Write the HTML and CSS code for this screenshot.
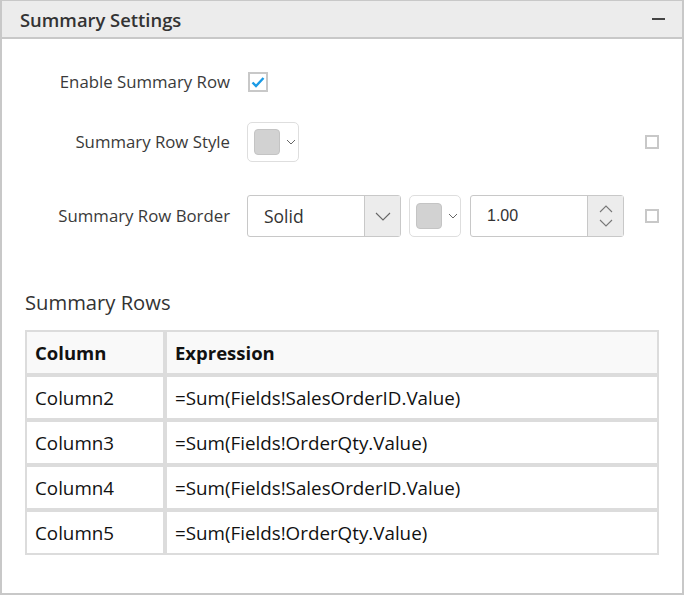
FILE: index.html
```html
<!DOCTYPE html>
<html>
<head>
<meta charset="utf-8">
<link rel="stylesheet" href="styles.css">
</head>
<body>
<div class="panel">
  <div class="panel-header">
    <span class="panel-title">Summary Settings</span>
    <span class="collapse-icon"></span>
  </div>
  <div class="panel-body">
    <div class="form">
      <div class="form-row row-enable">
        <label class="form-label">Enable Summary Row</label>
        <div class="controls">
          <span class="checkbox checked">
            <svg width="14" height="12" viewBox="0 0 14 12"><path d="M1.5 6.5 L5 10 L12.5 2" fill="none" stroke="#1a9be6" stroke-width="2.4" stroke-linecap="butt" stroke-linejoin="miter"/></svg>
          </span>
        </div>
        <span class="spacer"></span>
      </div>
      <div class="form-row row-style">
        <label class="form-label">Summary Row Style</label>
        <div class="controls">
          <span class="color-picker">
            <span class="swatch"></span>
            <svg class="mini-chevron" width="10" height="6" viewBox="0 0 10 6"><path d="M1 1 L5 5 L9 1" fill="none" stroke="#666" stroke-width="1"/></svg>
          </span>
        </div>
        <span class="small-check"></span>
      </div>
      <div class="form-row row-border">
        <label class="form-label">Summary Row Border</label>
        <div class="controls">
          <span class="dropdown">
            <span class="dropdown-text">Solid</span>
            <span class="dropdown-btn">
              <svg width="16" height="9" viewBox="0 0 16 9"><path d="M1 1 L8 8 L15 1" fill="none" stroke="#666" stroke-width="1.1"/></svg>
            </span>
          </span>
          <span class="color-picker">
            <span class="swatch"></span>
            <svg class="mini-chevron" width="10" height="6" viewBox="0 0 10 6"><path d="M1 1 L5 5 L9 1" fill="none" stroke="#666" stroke-width="1"/></svg>
          </span>
          <span class="numeric">
            <span class="numeric-text">1.00</span>
            <span class="spin">
              <svg width="14" height="8" viewBox="0 0 14 8"><path d="M1 7 L7 1 L13 7" fill="none" stroke="#777" stroke-width="1.1"/></svg>
              <svg width="14" height="8" viewBox="0 0 14 8"><path d="M1 1 L7 7 L13 1" fill="none" stroke="#777" stroke-width="1.1"/></svg>
            </span>
          </span>
        </div>
        <span class="small-check"></span>
      </div>
    </div>

    <div class="rows-section">
      <h2 class="section-title">Summary Rows</h2>
      <table class="rows-table">
        <thead>
          <tr><th class="col-name">Column</th><th>Expression</th></tr>
        </thead>
        <tbody>
          <tr><td>Column2</td><td>=Sum(Fields!SalesOrderID.Value)</td></tr>
          <tr><td>Column3</td><td>=Sum(Fields!OrderQty.Value)</td></tr>
          <tr><td>Column4</td><td>=Sum(Fields!SalesOrderID.Value)</td></tr>
          <tr><td>Column5</td><td>=Sum(Fields!OrderQty.Value)</td></tr>
        </tbody>
      </table>
    </div>
  </div>
</div>
</body>
</html>
```
FILE: styles.css
```css
* { box-sizing: border-box; }
html, body { margin: 0; padding: 0; background: #fff; }
body {
  font-family: "Open Sans", "Noto Sans", sans-serif;
  color: #333;
  width: 684px;
  height: 595px;
  overflow: hidden;
}
.panel {
  width: 684px;
  height: 595px;
  border: 2px solid #c8c8c8;
  border-top-width: 1px;
  border-bottom-width: 2px;
  display: flex;
  flex-direction: column;
}
.panel-header {
  height: 38px;
  background: #ececec;
  border-bottom: 2px solid #c8c8c8;
  display: flex;
  align-items: center;
  justify-content: space-between;
  padding: 0 17px 0 18px;
}
.panel-title {
  font-size: 18.4px;
  font-weight: 600;
  color: #333;
}
.collapse-icon {
  width: 13px;
  height: 2px;
  background: #444;
}
.panel-body { flex: 1; }
.form {
  padding-top: 23px;
  display: flex;
  flex-direction: column;
}
.form-row {
  display: flex;
  align-items: center;
  padding-right: 23px;
}
.row-enable { height: 40px; }
.row-style { height: 40px; margin-top: 20px; }
.row-border { height: 42px; margin-top: 33px; }
.form-label {
  width: 228px;
  text-align: right;
  font-size: 16.8px;
  color: #3a3a3a;
  white-space: nowrap;
  padding-bottom: 2px;
}
.controls {
  flex: 1;
  display: flex;
  align-items: center;
  margin-left: 17px;
}
.spacer { width: 14px; }
.checkbox {
  width: 20px;
  height: 20px;
  border: 2px solid #c8c8c8;
  display: flex;
  align-items: center;
  justify-content: center;
  margin-left: 1px;
}
.small-check {
  width: 14px;
  height: 14px;
  border: 2px solid #c8c8c8;
}
.color-picker {
  width: 52px;
  height: 40px;
  border: 1px solid #dedede;
  border-radius: 5px;
  display: flex;
  align-items: center;
  padding-left: 6px;
}
.row-border .color-picker { height: 42px; margin-left: 8px; }
.swatch {
  width: 26px;
  height: 26px;
  background: #d2d2d2;
  border: 1px solid #c4c4c4;
  border-radius: 4px;
}
.mini-chevron { margin-left: 6px; }
.dropdown {
  width: 154px;
  height: 42px;
  border: 1px solid #c8c8c8;
  border-radius: 3px;
  display: flex;
}
.dropdown-text {
  flex: 1;
  display: flex;
  align-items: center;
  padding-left: 16px;
  font-size: 17.5px;
  color: #333;
}
.dropdown-btn {
  width: 36px;
  background: #ececec;
  border-left: 1px solid #c8c8c8;
  display: flex;
  align-items: center;
  justify-content: center;
}
.numeric {
  width: 154px;
  height: 42px;
  margin-left: 9px;
  border: 1px solid #c8c8c8;
  border-radius: 3px;
  display: flex;
}
.numeric-text {
  flex: 1;
  display: flex;
  align-items: center;
  padding-left: 16px;
  font-family: "Liberation Sans", Arial, sans-serif;
  font-size: 16px;
  color: #333;
}
.spin {
  width: 36px;
  background: #ececec;
  border-left: 1px solid #c8c8c8;
  display: flex;
  flex-direction: column;
  align-items: center;
  justify-content: center;
  gap: 6px;
}
.rows-section {
  padding-left: 23px;
  margin-top: 53px;
}
.section-title {
  margin: 0 0 16px;
  font-size: 20.2px;
  font-weight: 400;
  line-height: 24px;
  color: #333;
}
.rows-table {
  width: 634px;
  border-collapse: separate;
  border-spacing: 0;
  color: #111;
  font-size: 18.8px;
}
.rows-table th, .rows-table td {
  border: 2px solid #dcdcdc;
  height: 45px;
  padding: 0 8px;
  text-align: left;
  vertical-align: middle;
  white-space: nowrap;
}
.rows-table th {
  background: #f9f9f9;
  font-weight: 700;
  font-size: 18.5px;
}
.rows-table td { padding-top: 1px; }
.col-name { width: 140px; }
```
